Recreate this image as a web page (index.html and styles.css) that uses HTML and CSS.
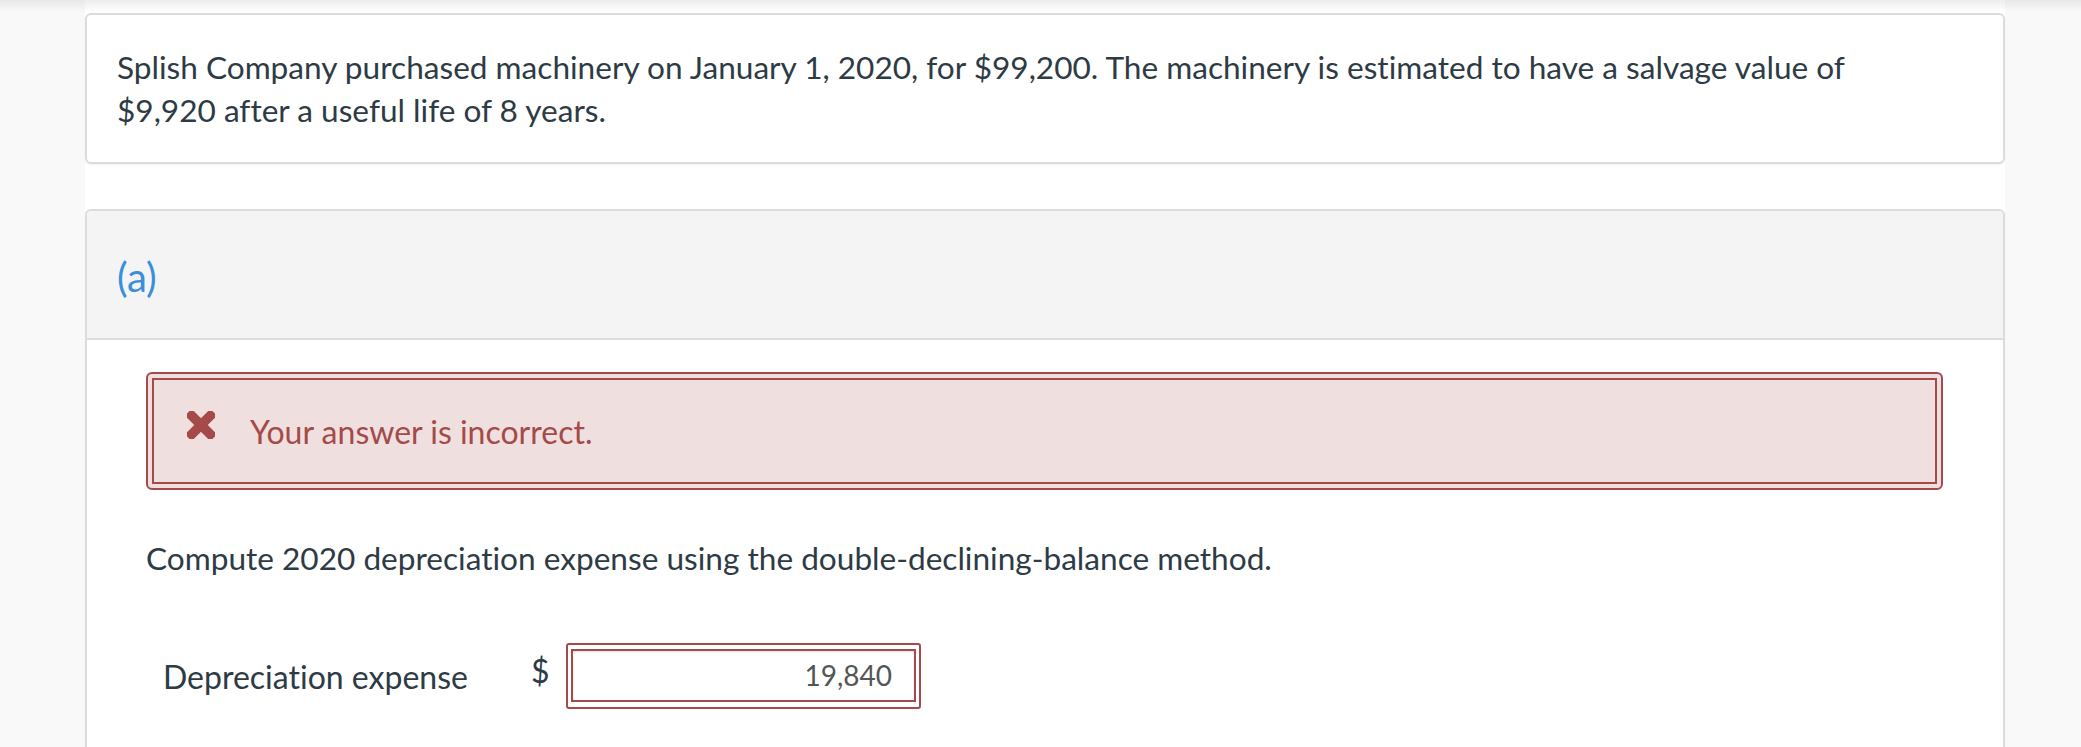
FILE: index.html
```html
<!DOCTYPE html>
<html lang="en">
<head>
<meta charset="utf-8">
<title>Depreciation</title>
<link rel="stylesheet" href="styles.css">
</head>
<body>
<div class="topshade"></div>
<div class="page">
  <main class="column">
    <section class="card intro">
      <p>Splish Company purchased machinery on January 1, 2020, for $99,200. The machinery is estimated to have a salvage value of $9,920 after a useful life of 8 years.</p>
    </section>
    <section class="card part">
      <header class="part-head">
        <h2 class="part-title">(a)</h2>
      </header>
      <div class="part-body">
        <div class="alert">
          <div class="alert-inner">
            <svg class="x-icon" viewBox="0 0 28 28" width="28" height="28" aria-hidden="true">
              <g transform="translate(14 14)" fill="#a54a4a">
                <rect x="-4.8" y="-18" width="9.6" height="36" rx="2.8" transform="rotate(45)"/>
                <rect x="-4.8" y="-18" width="9.6" height="36" rx="2.8" transform="rotate(-45)"/>
              </g>
            </svg>
            <span class="alert-text">Your answer is incorrect.</span>
          </div>
        </div>
        <p class="question">Compute 2020 depreciation expense using the double-declining-balance method.</p>
        <div class="answer-row">
          <span class="answer-label">Depreciation expense</span>
          <span class="currency">$</span>
          <div class="input-outer">
            <div class="input-inner">19,840</div>
          </div>
        </div>
      </div>
    </section>
  </main>
</div>
</body>
</html>
```

FILE: styles.css
```css
html, body {
  margin: 0;
  padding: 0;
}

body {
  background: #f9f9f9;
  font-family: Lato, "Open Sans", "Liberation Sans", sans-serif;
  font-variant-ligatures: no-common-ligatures;
  color: #2d3b45;
  overflow: hidden;
}

.topshade {
  position: absolute;
  top: 0;
  left: 0;
  right: 0;
  height: 12px;
  background: linear-gradient(to bottom, rgba(0, 0, 0, 0.07), rgba(0, 0, 0, 0));
  pointer-events: none;
}

.page {
  padding-left: 85px;
}

.column {
  width: 1920px;
  background: #ffffff;
  padding-top: 13px;
  min-height: 900px;
}

.card {
  border: 2px solid #dcdcdc;
  border-radius: 6px;
  background: #ffffff;
  box-shadow: 0 1px 2px rgba(0, 0, 0, 0.05);
}

.intro {
  padding: 31px 30px 30px 30px;
}

.intro p {
  margin: 0;
  max-width: 1790px;
  font-size: 31.6px;
  line-height: 43px;
}

.part {
  margin-top: 45px;
  overflow: hidden;
}

.part-head {
  background: #f4f4f4;
  border-bottom: 2px solid #dcdcdc;
  height: 127px;
  display: flex;
  align-items: center;
  padding-left: 30px;
}

.part-title {
  margin: 0;
  font-weight: 400;
  font-size: 40px;
  line-height: 44px;
  color: #3a8edb;
  padding-top: 4px;
}

.part-body {
  padding: 32px 60px 80px 59px;
}

.alert {
  border: 2px solid #a54a4a;
  border-radius: 6px;
  padding: 4px;
  background: #efdfdf;
}

.alert-inner {
  border: 2px solid #a54a4a;
  background: #efdfdf;
  height: 102px;
  display: flex;
  align-items: center;
  padding-left: 33px;
}

.x-icon {
  flex: none;
  display: block;
  margin-top: -12px;
}

.alert-text {
  margin-left: 35px;
  font-size: 32px;
  line-height: 43px;
  color: #a54a4a;
}

.question {
  margin: 47px 0 0 0;
  font-size: 31.6px;
  line-height: 43px;
}

.answer-row {
  display: flex;
  align-items: center;
  margin-top: 63px;
  padding-left: 17px;
}

.answer-label {
  width: 368px;
  flex: none;
  font-size: 32px;
  line-height: 43px;
}

.currency {
  width: 35px;
  flex: none;
  font-size: 32px;
  line-height: 43px;
  margin-top: -12px;
}

.input-outer {
  border: 2px solid #a54a4a;
  border-radius: 3px;
  padding: 4px 3px 5px 3px;
  width: 355px;
  box-sizing: border-box;
}

.input-inner {
  border: 2px solid #a54a4a;
  height: 49px;
  line-height: 49px;
  text-align: right;
  padding-right: 22px;
  font-size: 28px;
  color: #555555;
  box-shadow: inset 0 1px 2px rgba(0, 0, 0, 0.12);
}
```
